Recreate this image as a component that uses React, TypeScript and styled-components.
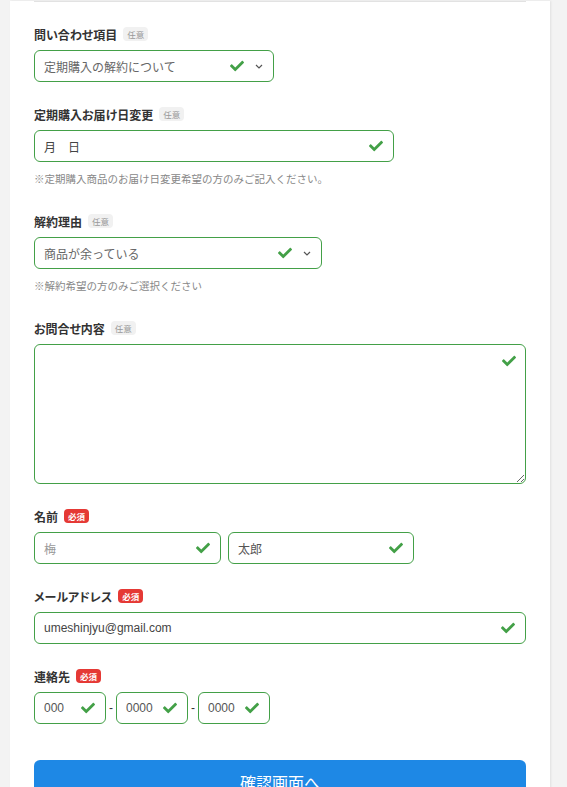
import React from 'react';
import styled, { createGlobalStyle } from 'styled-components';
import { FaCheck } from 'react-icons/fa';

const GlobalStyle = createGlobalStyle`
  html, body {
    margin: 0;
    padding: 0;
    background: #f3f3f3;
    font-family: "Liberation Sans", "Noto Sans CJK JP", sans-serif;
    color: #333;
  }
  * { box-sizing: border-box; }
`;

const Check: React.FC = () => (
  <CheckMark>
    <FaCheck size={14} />
  </CheckMark>
);

const Chevron: React.FC = () => (
  <ChevronMark width="8" height="5" viewBox="0 0 8 5">
    <polyline points="1,1 4,4 7,1" fill="none" stroke="#555" strokeWidth="1.2" />
  </ChevronMark>
);

const App: React.FC = () => {
  return (
    <>
      <GlobalStyle />
      <Page>
        <Card>
          <Divider />

          <Group>
            <LabelRow>
              <Label>問い合わせ項目</Label>
              <Badge>任意</Badge>
            </LabelRow>
            <Field width={240}>
              <Value readOnly value="定期購入の解約について" tone="#666" />
              <Check />
              <Chevron />
            </Field>
          </Group>

          <Group>
            <LabelRow>
              <Label>定期購入お届け日変更</Label>
              <Badge>任意</Badge>
            </LabelRow>
            <Field width={360}>
              <Value readOnly value="月　日" tone="#444" />
              <Check />
            </Field>
            <Note>※定期購入商品のお届け日変更希望の方のみご記入ください。</Note>
          </Group>

          <Group>
            <LabelRow>
              <Label>解約理由</Label>
              <Badge>任意</Badge>
            </LabelRow>
            <Field width={288}>
              <Value readOnly value="商品が余っている" tone="#666" />
              <Check />
              <Chevron />
            </Field>
            <Note>※解約希望の方のみご選択ください</Note>
          </Group>

          <Group>
            <LabelRow>
              <Label>お問合せ内容</Label>
              <Badge>任意</Badge>
            </LabelRow>
            <AreaWrap>
              <Area />
              <AreaCheck>
                <FaCheck size={14} />
              </AreaCheck>
            </AreaWrap>
          </Group>

          <Group>
            <LabelRow>
              <Label>名前</Label>
              <Badge required>必須</Badge>
            </LabelRow>
            <NameRow>
              <Field>
                <Value readOnly value="梅" tone="#999" />
                <Check />
              </Field>
              <Field>
                <Value readOnly value="太郎" tone="#555" />
                <Check />
              </Field>
            </NameRow>
          </Group>

          <Group>
            <LabelRow>
              <Label>メールアドレス</Label>
              <Badge required>必須</Badge>
            </LabelRow>
            <Field>
              <Value readOnly value="umeshinjyu@gmail.com" tone="#444" />
              <Check />
            </Field>
          </Group>

          <Group>
            <LabelRow>
              <Label>連絡先</Label>
              <Badge required>必須</Badge>
            </LabelRow>
            <PhoneRow>
              <Field width={72}>
                <Value readOnly value="000" tone="#555" />
                <Check />
              </Field>
              <Dash>-</Dash>
              <Field width={72}>
                <Value readOnly value="0000" tone="#555" />
                <Check />
              </Field>
              <Dash>-</Dash>
              <Field width={72}>
                <Value readOnly value="0000" tone="#555" />
                <Check />
              </Field>
            </PhoneRow>
          </Group>

          <Submit type="button">確認画面へ</Submit>
        </Card>
      </Page>
    </>
  );
};

const Page = styled.div`
  padding-left: 10px;
  min-height: 787px;
`;

const Card = styled.div`
  width: 540px;
  min-height: 787px;
  background: #fff;
  padding: 0 24px 24px;
  box-shadow: 1px 0 2px rgba(0, 0, 0, 0.08);
`;

const Divider = styled.div`
  height: 1px;
  margin-top: 1px;
  background: #e2e2e2;
  margin-bottom: 23px;
`;

const Group = styled.div`
  margin-bottom: 23px;
`;

const LabelRow = styled.div`
  display: flex;
  align-items: center;
  gap: 6px;
  height: 18px;
  margin-bottom: 7px;
`;

const Label = styled.span`
  font-family: "Noto Sans CJK JP", sans-serif;
  font-size: 12px;
  font-weight: 700;
  font-feature-settings: "palt";
  color: #333;
`;

const Badge = styled.span<{ required?: boolean }>`
  font-family: "Noto Sans CJK JP", sans-serif;
  font-size: 8.5px;
  line-height: 14px;
  padding: 0 4px;
  border-radius: 4px;
  font-weight: ${(p) => (p.required ? 700 : 400)};
  background: ${(p) => (p.required ? '#e53935' : '#f1f1f1')};
  color: ${(p) => (p.required ? '#fff' : '#999')};
`;

const Field = styled.div<{ width?: number }>`
  display: flex;
  align-items: center;
  width: ${(p) => (p.width ? `${p.width}px` : '100%')};
  height: 32px;
  border: 1px solid #43a047;
  border-radius: 6px;
  padding: 0 10px 0 9px;
  background: #fff;
`;

const Value = styled.input<{ tone: string }>`
  flex: 1;
  min-width: 0;
  border: none;
  outline: none;
  padding: 0;
  background: transparent;
  font-family: "Liberation Sans", "Noto Sans CJK JP", sans-serif;
  font-size: 12px;
  color: ${(p) => p.tone};
`;

const CheckMark = styled.span`
  display: flex;
  color: #43a047;
`;

const ChevronMark = styled.svg`
  margin-left: 11px;
  flex-shrink: 0;
`;

const Note = styled.p`
  margin: 10px 0 0;
  padding-bottom: 3px;
  font-family: "Noto Sans CJK JP", sans-serif;
  font-size: 10.5px;
  line-height: 14px;
  color: #888;
`;

const AreaWrap = styled.div`
  position: relative;
`;

const Area = styled.textarea`
  display: block;
  width: 100%;
  height: 140px;
  border: 1px solid #43a047;
  border-radius: 6px;
  resize: vertical;
  outline: none;
  padding: 9px;
  font-family: "Liberation Sans", "Noto Sans CJK JP", sans-serif;
  font-size: 12px;
`;

const AreaCheck = styled.span`
  position: absolute;
  top: 10px;
  right: 10px;
  display: flex;
  color: #43a047;
`;

const NameRow = styled.div`
  display: grid;
  grid-template-columns: 187px 186px;
  gap: 7px;
`;

const PhoneRow = styled.div`
  display: flex;
  align-items: center;
  gap: 2px;
`;

const Dash = styled.span`
  width: 6px;
  text-align: center;
  font-size: 12px;
  color: #333;
`;

const Submit = styled.button`
  display: block;
  width: 100%;
  height: 44px;
  margin-top: 36px;
  border: none;
  border-radius: 6px;
  background: #1e88e5;
  color: #fff;
  font-family: "Noto Sans CJK JP", sans-serif;
  font-size: 16px;
  cursor: pointer;
`;

export default App;
